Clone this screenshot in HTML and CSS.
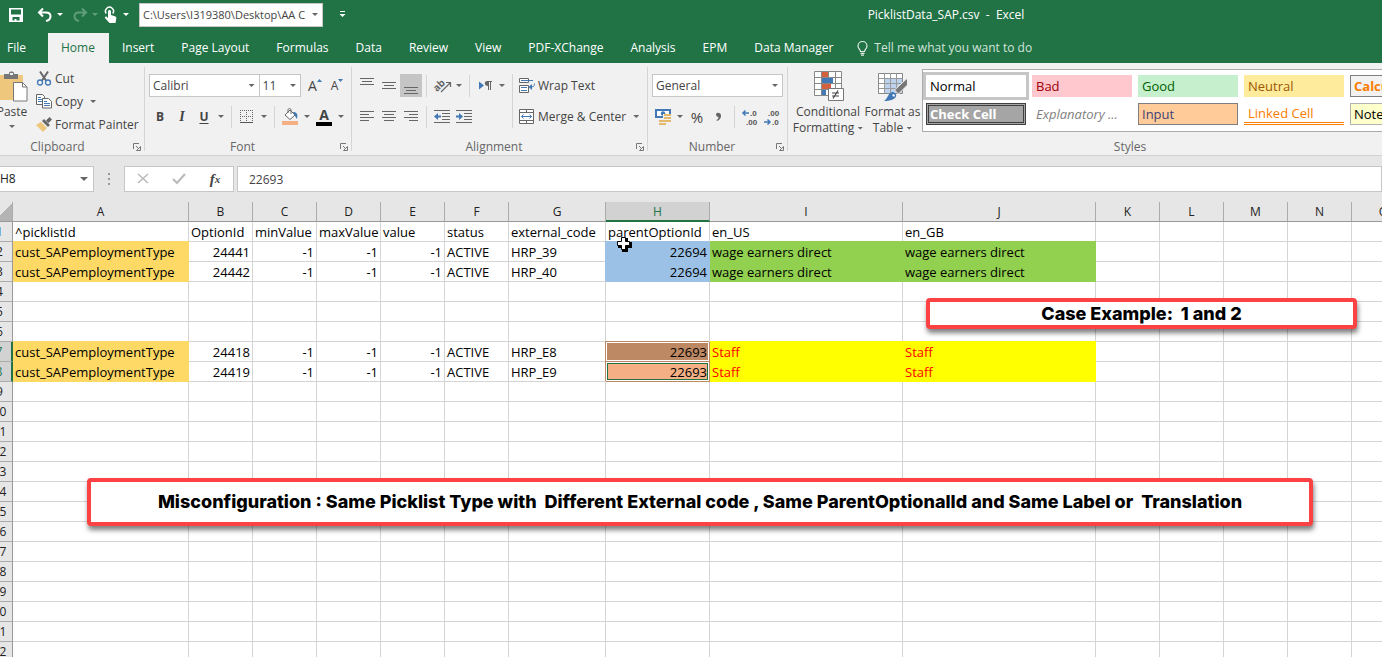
FILE: index.html
```html
<!DOCTYPE html>
<html lang="en">

<head>
    <meta charset="UTF-8">
    <meta name="viewport" content="width=device-width, initial-scale=1.0">
    <title>PicklistData_SAP.csv - Excel</title>
    <link rel="stylesheet" href="styles.css">
</head>

<body>
    <header class="title-bar">
        <div class="quick-access">
            <button class="qa-button" aria-label="Save">
                <svg width="16" height="16" viewBox="0 0 16 16"><path fill="#fff" fill-rule="evenodd" d="M1 1h14v14H1zM3 2.500v5h10v-5zM4.500 10v3.500h2V12h2v1.500h3V10z"/></svg>
            </button>
            <button class="qa-button" aria-label="Undo">
                <svg width="16" height="16" viewBox="0 0 16 16"><path fill="none" stroke="#fff" stroke-width="2" d="M6 1.500L2 5.500l4 4M2.500 5.500H9c6 0 6 7 0 8.500"/></svg>
            </button>
            <span class="caret light"></span>
            <button class="qa-button redo" aria-label="Redo">
                <svg width="16" height="16" viewBox="0 0 16 16"><path fill="none" stroke="#5f9d7b" stroke-width="2" d="M10 1.500l4 4-4 4M13.500 5.500H7c-6 0-6 7 0 8.500"/></svg>
            </button>
            <span class="caret faded"></span>
            <button class="qa-button" aria-label="Touch mode">
                <svg width="16" height="18" viewBox="0 0 16 18"><path fill="none" stroke="#fff" stroke-width="1.500" d="M3.200 7.500a4 4 0 1 1 6.600 0"/><path fill="#fff" d="M5 5.500c0-2 3-2 3 0V9l4 1.200c1.200.4 1.500 1.300 1.300 2.300l-.8 4.500H6.500L2 12c-.6-1 .6-2 1.600-1.200L5 12z"/></svg>
            </button>
            <span class="caret light"></span>
            <div class="select-box path-box">
                <select aria-label="File path"><option>C:\Users\I319380\Desktop\AA C</option></select>
                <span class="caret"></span>
            </div>
            <button class="qa-button more" aria-label="Customize Quick Access Toolbar">
                <svg width="7" height="7" viewBox="0 0 7 7"><path fill="#fff" d="M1 0h5v1H1zM0.500 3h6L3.500 6z"/></svg>
            </button>
        </div>
        <div class="document-title">PicklistData_SAP.csv&nbsp; -&nbsp; Excel</div>
    </header>

    <nav class="tabs">
        <a href="#" class="file">File</a>
        <a href="#" class="active">Home</a>
        <a href="#">Insert</a>
        <a href="#">Page Layout</a>
        <a href="#">Formulas</a>
        <a href="#">Data</a>
        <a href="#">Review</a>
        <a href="#">View</a>
        <a href="#">PDF-XChange</a>
        <a href="#">Analysis</a>
        <a href="#">EPM</a>
        <a href="#">Data Manager</a>
        <a href="#" class="tell-me">
            <svg width="11" height="15" viewBox="0 0 11 15"><path fill="none" stroke="#e4efe8" stroke-width="1.200" d="M3.500 10.500c0-2-2.500-2.500-2.500-5.500a4.500 4.500 0 0 1 9 0c0 3-2.500 3.500-2.500 5.500zM3.500 12.300h4M4 14.200h3"/></svg>
            Tell me what you want to do
        </a>
    </nav>

    <section class="ribbon">
        <div class="group">
            <div class="group-body clipboard">
                <button class="paste">
                    <svg width="32" height="31" viewBox="0 0 32 31"><path fill="#eec77d" d="M2 4h25v25H2z"/><path fill="#777" d="M8 3h5V1.500C14 0 17 0 18 1.500V3h4v5H8z"/><path fill="#f0f0f0" d="M14 2h3v2h-3z"/><path fill="#fff" stroke="#777" d="M17.500 11.500h9l4.500 4.500v14H17.500z"/><path fill="none" stroke="#777" d="M26.500 11.500V16H31"/></svg>
                    <span>Paste</span>
                    <span class="caret"></span>
                </button>
                <div class="clipboard-list">
                    <button class="labelled">
                        <svg width="16" height="15" viewBox="0 0 16 15"><path fill="none" stroke="#666" stroke-width="2" d="M4 0.500l6 9M12 0.500l-6 9"/><circle cx="4" cy="11.500" r="2.500" fill="#f0f0f0" stroke="#4178b5" stroke-width="1.300"/><circle cx="12" cy="11.500" r="2.500" fill="#f0f0f0" stroke="#4178b5" stroke-width="1.300"/></svg>
                        Cut
                    </button>
                    <button class="labelled">
                        <svg width="16" height="15" viewBox="0 0 16 15"><path fill="#fff" stroke="#666" d="M.5.500h6l2 2v8h-8z"/><path stroke="#4178b5" d="M2 3.500h3M2 5.500h4M2 7.500h4"/><path fill="#fff" stroke="#666" d="M6.500 4.500h6l3 3v6.500h-9z"/><path stroke="#4178b5" d="M8 7.500h3M8 9.500h6M8 11.500h6"/></svg>
                        Copy
                        <span class="caret"></span>
                    </button>
                    <button class="labelled">
                        <svg width="16" height="15" viewBox="0 0 16 15"><path fill="#eec77d" d="M0 8l5-3 6 6-4 4z"/><path fill="#666" d="M6 4l2-2 6 6-2 2zM10 3.500L13.500 0 16 2.500 12.500 6z"/></svg>
                        Format Painter
                    </button>
                </div>
            </div>
            <div class="group-name clipboard-name">Clipboard<svg class="launcher" width="8" height="8" viewBox="0 0 8 8"><path fill="none" stroke="#777" d="M.5 6V.5H6M3 3l3 3M7.500 3.500v4h-4z"/></svg></div>
        </div>

        <div class="group">
            <div class="group-body">
                <div class="tool-row">
                    <div class="select-box font-name">
                        <select aria-label="Font"><option>Calibri</option></select>
                        <span class="caret"></span>
                    </div>
                    <div class="select-box font-size">
                        <select aria-label="Font size"><option>11</option></select>
                        <span class="caret"></span>
                    </div>
                    <button class="tool grow" aria-label="Increase font size">A<svg width="5" height="3" viewBox="0 0 5 3"><path fill="#4178b5" d="M0 3h5L2.500 0z"/></svg></button>
                    <button class="tool shrink" aria-label="Decrease font size">A<svg width="5" height="3" viewBox="0 0 5 3"><path fill="#4178b5" d="M0 0h5L2.500 3z"/></svg></button>
                </div>
                <div class="tool-row">
                    <button class="tool bold">B</button>
                    <button class="tool italic">I</button>
                    <button class="tool underline">U</button>
                    <span class="caret-slot"><span class="caret"></span></span>
                    <span class="divider"></span>
                    <button class="tool" aria-label="Borders">
                        <svg width="14" height="14" viewBox="0 0 14 14"><path fill="none" stroke="#666" stroke-dasharray="1 1" d="M0 .5h13M0 6.500h13M.5 0v13M6.500 0v13M12.500 0v13"/><path stroke="#555" d="M0 12.500h13"/></svg>
                    </button>
                    <span class="caret-slot"><span class="caret"></span></span>
                    <span class="divider"></span>
                    <button class="tool" aria-label="Fill colour">
                        <svg width="17" height="17" viewBox="0 0 17 17"><path fill="#fff" stroke="#666" d="M3 7l5-5 5 5-5 4.500z"/><path fill="none" stroke="#666" d="M6 5V2c0-2 3-2 3 0v4"/><path fill="#4178b5" d="M11 4c4 0 5 2 4 7l-2-3z"/><path fill="#f4b084" d="M0 13h16v4H0z"/></svg>
                    </button>
                    <span class="caret-slot"><span class="caret"></span></span>
                    <button class="tool font-color" aria-label="Font colour">A</button>
                    <span class="caret-slot"><span class="caret"></span></span>
                </div>
            </div>
            <div class="group-name">Font<svg class="launcher" width="8" height="8" viewBox="0 0 8 8"><path fill="none" stroke="#777" d="M.5 6V.5H6M3 3l3 3M7.500 3.500v4h-4z"/></svg></div>
        </div>

        <div class="group">
            <div class="group-body alignment">
                <div class="tool-column">
                    <div class="tool-row">
                        <button class="tool" aria-label="Top align"><svg width="14" height="16" viewBox="0 0 14 16"><path stroke="#666" d="M0 .5h14M2 3.500h10M0 6.500h14"/></svg></button>
                        <button class="tool" aria-label="Middle align"><svg width="14" height="16" viewBox="0 0 14 16"><path stroke="#666" d="M0 4.500h14M2 7.500h10M0 10.500h14"/></svg></button>
                        <button class="tool pressed" aria-label="Bottom align"><svg width="14" height="16" viewBox="0 0 14 16"><path stroke="#666" d="M0 9.500h14M2 12.500h10M0 15.500h14"/></svg></button>
                        <span class="divider"></span>
                        <button class="tool" aria-label="Orientation">
                            <svg width="17" height="17" viewBox="0 0 17 17"><text x="-1" y="12" class="orient-text" transform="rotate(-45 5 9)">ab</text><path fill="none" stroke="#666" stroke-width="1.200" d="M7 15l9-9M12 5.500h4.500V10"/></svg>
                        </button>
                        <span class="caret-slot"><span class="caret"></span></span>
                        <span class="divider"></span>
                        <button class="tool" aria-label="Text direction">
                            <svg width="14" height="12" viewBox="0 0 14 12"><path fill="#4178b5" d="M1 1.500l5 4-5 4z"/><path fill="#666" d="M9 1h5v1h-1v8h-1V2h-1v8h-1V6C6 6 6 1 9 1z"/></svg>
                        </button>
                        <span class="caret-slot"><span class="caret"></span></span>
                    </div>
                    <div class="tool-row">
                        <button class="tool" aria-label="Align left"><svg width="14" height="13" viewBox="0 0 14 13"><path stroke="#666" d="M0 1.500h14M0 4.500h9M0 7.500h14M0 10.500h9"/></svg></button>
                        <button class="tool" aria-label="Center"><svg width="14" height="13" viewBox="0 0 14 13"><path stroke="#666" d="M0 1.500h14M2 4.500h10M0 7.500h14M2 10.500h10"/></svg></button>
                        <button class="tool" aria-label="Align right"><svg width="14" height="13" viewBox="0 0 14 13"><path stroke="#666" d="M0 1.500h14M5 4.500h9M0 7.500h14M5 10.500h9"/></svg></button>
                        <span class="divider"></span>
                        <button class="tool" aria-label="Decrease indent"><svg width="16" height="13" viewBox="0 0 16 13"><path stroke="#666" d="M0 .5h16M8 3.500h8M8 6.500h8M8 9.500h8M0 12.500h16"/><path fill="#4178b5" d="M0 6.500L4 3v2.500h3v2H4V10z"/></svg></button>
                        <button class="tool" aria-label="Increase indent"><svg width="16" height="13" viewBox="0 0 16 13"><path stroke="#666" d="M0 .5h16M8 3.500h8M8 6.500h8M8 9.500h8M0 12.500h16"/><path fill="#4178b5" d="M7 6.500L3 3v2.500H0v2h3V10z"/></svg></button>
                    </div>
                </div>
                <div class="tool-column wrap-merge">
                    <button class="labelled">
                        <svg width="16" height="16" viewBox="0 0 16 16"><path fill="#fff" stroke="#666" d="M.5.500h9v4h-9zM.5 7.500h9v7h-9z"/><path fill="none" stroke="#4178b5" d="M2 2.500h12M2 9.500h6M2 12.500h6M15.500 5.500c0 3-1 3.500-5 3.500"/><path fill="#4178b5" d="M9.500 9l3.500-3v6z"/></svg>
                        Wrap Text
                    </button>
                    <button class="labelled">
                        <svg width="16" height="16" viewBox="0 0 16 16"><path fill="#fff" stroke="#666" d="M.5.500h14v14H.5zM.5 3.500h14M.5 11.500h14M7.500.500v3M7.500 11.500v3"/><path fill="none" stroke="#4178b5" d="M2.500 7.500h10M4.500 5.500l-2 2 2 2M10.500 5.500l2 2-2 2"/></svg>
                        Merge &amp; Center
                        <span class="caret"></span>
                    </button>
                </div>
            </div>
            <div class="group-name">Alignment<svg class="launcher" width="8" height="8" viewBox="0 0 8 8"><path fill="none" stroke="#777" d="M.5 6V.5H6M3 3l3 3M7.500 3.500v4h-4z"/></svg></div>
        </div>

        <div class="group">
            <div class="group-body">
                <div class="tool-row">
                    <div class="select-box number-format">
                        <select aria-label="Number format"><option>General</option></select>
                        <span class="caret"></span>
                    </div>
                </div>
                <div class="tool-row">
                    <button class="tool" aria-label="Accounting format">
                        <svg width="17" height="17" viewBox="0 0 17 17"><path fill="#4178b5" d="M0 1h16v9H0z"/><path fill="#fff" d="M2 3h12v5H2z"/><circle cx="8" cy="5.500" r="2.200" fill="#4178b5"/><path fill="#f0f0f0" d="M8 6h9v4H8zM3 10h10v7H3z"/><path fill="#e5b96c" d="M9 6h7v2H9zM9 9h7v2H9zM9 12h7v2H9zM4 12h7v2H4zM4 15h7v2H4z"/></svg>
                    </button>
                    <span class="caret-slot"><span class="caret"></span></span>
                    <button class="tool percent">%</button>
                    <button class="tool" aria-label="Comma style"><svg width="6" height="10" viewBox="0 0 6 10"><path fill="#666" d="M0 2.500C0 0 5 0 5 3.500 5 6 4 8 1 9l-.5-1c1.500-.7 2-1.500 2-3C1 5 0 4 0 2.500z"/></svg></button>
                    <span class="divider"></span>
                    <button class="tool" aria-label="Increase decimal">
                        <svg width="16" height="18" viewBox="0 0 16 18"><path fill="none" stroke="#4178b5" stroke-width="1.500" d="M1 5h6M3.500 2.500L1 5l2.500 2.500"/><text x="8" y="8" class="decimal">.0</text><text x="4" y="17" class="decimal">.00</text></svg>
                    </button>
                    <button class="tool" aria-label="Decrease decimal">
                        <svg width="16" height="18" viewBox="0 0 16 18"><path fill="none" stroke="#4178b5" stroke-width="1.500" d="M0 14h6M3.500 11.500L6 14l-2.500 2.500"/><text x="4" y="8" class="decimal">.00</text><text x="8" y="17" class="decimal">.0</text></svg>
                    </button>
                </div>
            </div>
            <div class="group-name">Number<svg class="launcher" width="8" height="8" viewBox="0 0 8 8"><path fill="none" stroke="#777" d="M.5 6V.5H6M3 3l3 3M7.500 3.500v4h-4z"/></svg></div>
        </div>

        <div class="group styles-group">
            <div class="group-body styles-body">
                <button class="big conditional">
                    <svg width="31" height="31" viewBox="0 0 31 31"><path fill="#fff" stroke="#888" d="M1.500.500h27v24h-27zM1.500 6.500h27M1.500 12.500h27M1.500 18.500h27M8.500.500v24M15.500.500v24M22.500.500v24"/><path fill="#d65f3d" d="M9 1h6v5H9zM9 13h9v5H9z"/><path fill="#4178b5" d="M9 7h11v5H9zM9 19h4v5H9z"/><path fill="#fff" stroke="#777" d="M15.500 17.500h15v12h-15z"/><path stroke="#444" stroke-width="1.200" d="M19 22h7M19 25h7M25 19.500l-5 8"/></svg>
                    <span>Conditional</span>
                    <span class="with-caret">Formatting <span class="caret"></span></span>
                </button>
                <button class="big">
                    <svg width="31" height="31" viewBox="0 0 31 31"><path fill="#fff" stroke="#888" d="M1.500 2.500h24v20h-24z"/><path fill="#bdd2ec" d="M8 8h17v14H8z"/><path stroke="#999" fill="none" d="M1.500 7.500h24M1.500 12.500h24M1.500 17.500h24M7.500 2.500v20M13.500 2.500v20M19.500 2.500v20"/><path fill="#777" stroke="#f1f1f1" d="M30.500 7v7l-9 9-4-4z"/><path fill="#4178b5" d="M7 30c4-2 4-9 9-9 6 2 4 9-9 9z"/><path fill="#fff" d="M15 24c2-2 4 0 2 2z"/></svg>
                    <span>Format as</span>
                    <span class="with-caret">Table <span class="caret"></span></span>
                </button>
                <div class="gallery">
                    <button class="style normal">Normal</button>
                    <button class="style check-cell">Check Cell</button>
                    <button class="style bad">Bad</button>
                    <button class="style explanatory">Explanatory ...</button>
                    <button class="style good">Good</button>
                    <button class="style input-style">Input</button>
                    <button class="style neutral">Neutral</button>
                    <button class="style linked">Linked Cell</button>
                    <button class="style calculation">Calculation</button>
                    <button class="style note">Note</button>
                </div>
            </div>
            <div class="group-name">Styles</div>
        </div>
    </section>

    <section class="formula-bar">
        <div class="select-box name-box">
            <input type="text" value="H8" aria-label="Name box">
            <span class="caret"></span>
        </div>
        <svg class="grip" width="2" height="12" viewBox="0 0 2 12"><path fill="#999" d="M0 0h2v2H0zM0 5h2v2H0zM0 10h2v2H0z"/></svg>
        <div class="formula-buttons">
            <button aria-label="Cancel"><svg width="12" height="12" viewBox="0 0 12 12"><path stroke="#bbb" stroke-width="1.600" d="M1 1l10 9M11 1L1 10"/></svg></button>
            <button aria-label="Enter"><svg width="14" height="12" viewBox="0 0 14 12"><path fill="none" stroke="#bbb" stroke-width="2.200" d="M1 6l4 4 8-9"/></svg></button>
            <button class="fx" aria-label="Insert function">f<small>x</small></button>
        </div>
        <input type="text" class="formula-input" value="22693" aria-label="Formula">
    </section>

    <main class="sheet">
        <table>
            <colgroup>
                <col class="col-row"><col class="col-a"><col><col><col><col><col><col class="col-g"><col class="col-h"><col class="col-label"><col class="col-label"><col><col><col><col><col>
            </colgroup>
            <thead>
                <tr><th class="corner"></th></tr>
            </thead>
            <tbody></tbody>
        </table>

        <svg class="cursor" width="16" height="16" viewBox="0 0 16 16"><path fill="#000" d="M6 2h6v4h4v6h-4v4H6v-4H2V6h4z"/><path fill="#fff" stroke="#000" d="M5.500 1.500h4v4h4v4h-4v4h-4v-4h-4v-4h4z"/></svg>
        <div class="callout case">Case Example:&nbsp; 1 and 2</div>
        <div class="callout summary">Misconfiguration : Same Picklist Type with&nbsp; Different External code , Same ParentOptionalId and Same Label or&nbsp; Translation</div>
    </main>

    <script>
        const columns = 'ABCDEFGHIJKLMNO'.split('');
        const numeric = ['B', 'C', 'D', 'E', 'H'];
        const rows = {
            1: ['^picklistId', 'OptionId', 'minValue', 'maxValue', 'value', 'status', 'external_code', 'parentOptionId', 'en_US', 'en_GB'],
            2: ['cust_SAPemploymentType', '24441', '-1', '-1', '-1', 'ACTIVE', 'HRP_39', '22694', 'wage earners direct', 'wage earners direct'],
            3: ['cust_SAPemploymentType', '24442', '-1', '-1', '-1', 'ACTIVE', 'HRP_40', '22694', 'wage earners direct', 'wage earners direct'],
            7: ['cust_SAPemploymentType', '24418', '-1', '-1', '-1', 'ACTIVE', 'HRP_E8', '22693', 'Staff', 'Staff'],
            8: ['cust_SAPemploymentType', '24419', '-1', '-1', '-1', 'ACTIVE', 'HRP_E9', '22693', 'Staff', 'Staff']
        };
        // cell fills by row, then by column
        const first = { A: 'gold', H: 'blue', I: 'green', J: 'green' };
        const fills = {
            2: first,
            3: first,
            7: { A: 'gold', H: 'selected', I: 'yellow', J: 'yellow' },
            8: { A: 'gold', H: 'selected current', I: 'yellow', J: 'yellow' }
        };

        const headRow = document.querySelector('thead tr');
        columns.forEach(name => {
            const th = document.createElement('th');
            th.textContent = name;
            if (name === 'H') th.className = 'active-column';
            headRow.appendChild(th);
        });

        const body = document.querySelector('tbody');
        for (let r = 1; r <= 22; r++) {
            const tr = document.createElement('tr');
            const th = document.createElement('th');
            th.textContent = r;
            if (r === 7 || r === 8) th.className = 'active-row';
            tr.appendChild(th);
            columns.forEach((name, i) => {
                const td = document.createElement('td');
                td.textContent = (rows[r] && rows[r][i]) || '';
                if (fills[r] && fills[r][name]) td.className = fills[r][name];
                if (r > 1 && numeric.includes(name)) td.classList.add('number');
                tr.appendChild(td);
            });
            body.appendChild(tr);
        }
    </script>
</body>

</html>
```
FILE: styles.css
```css
* {
    box-sizing: border-box;
}

body {
    margin: 0;
    height: 100vh;
    display: flex;
    flex-direction: column;
    overflow: hidden;
    background-color: #e6e6e6;
    color: #444;
    font-family: "Open Sans", "Noto Sans", sans-serif;
    font-size: 12px;
    line-height: 16px;
}

button,
input,
select {
    font: inherit;
    color: inherit;
    background: none;
    border: none;
    border-radius: 0;
    margin: 0;
    padding: 0;
}

select {
    appearance: none;
}

svg {
    display: block;
    flex: none;
    overflow: visible;
}

.caret {
    flex: none;
    width: 6px;
    height: 3px;
    background-color: #666;
    clip-path: polygon(0 0, 100% 0, 50% 100%);
}

.caret.light {
    background-color: #fff;
}

.caret.faded {
    background-color: #5f9d7b;
}

/* drop-down with its arrow stacked on the right */
.select-box {
    display: grid;
    align-items: center;
    height: 23px;
    background-color: #fff;
    border: 1px solid #c6c6c6;
}

.select-box > * {
    grid-area: 1 / 1;
    min-width: 0;
}

.select-box > select {
    width: 100%;
    padding-left: 3px;
}

.select-box .caret {
    justify-self: end;
    margin-right: 4px;
    pointer-events: none;
}

/* title bar */
.title-bar {
    display: grid;
    grid-template-columns: 510px 1fr;
    height: 33px;
    padding-bottom: 4px;
    align-items: center;
    background-color: #217346;
    color: #fff;
}

.quick-access {
    display: flex;
    align-items: center;
    padding-left: 8px;
}

.qa-button {
    margin-right: 4px;
}

.qa-button:first-child {
    margin-right: 13px;
}

.redo {
    margin-left: 9px;
}

.quick-access .caret + .qa-button:not(.redo) {
    margin-left: 5px;
}

.path-box {
    width: 184px;
    height: 24px;
    margin-left: 10px;
    color: #444;
    font-size: 11px;
}

.quick-access .more {
    margin-left: 16px;
}

.document-title {
    text-align: center;
}

/* tabs */
.tabs {
    display: flex;
    height: 30px;
    background-color: #217346;
}

.tabs a {
    display: flex;
    align-items: center;
    padding: 0 14px 0 13px;
    color: #fff;
    text-decoration: none;
    white-space: nowrap;
}

.tabs .file {
    padding: 0 22px 0 7px;
}

.tabs .active {
    background-color: #f1f1f1;
    color: #217346;
}

.tabs .tell-me {
    gap: 6px;
    padding-left: 10px;
    color: #d3e3da;
}

/* ribbon */
.ribbon {
    display: grid;
    grid-template-columns: 145px 207px 296px 140px 1fr;
    flex: none;
    background-color: #f1f1f1;
    border-bottom: 1px solid #d2d2d2;
}

.group {
    display: flex;
    flex-direction: column;
    min-width: 0;
    height: 92px;
    padding-top: 4px;
    background: linear-gradient(#d5d5d5, #d5d5d5) no-repeat right 50% / 1px 84px;
}

.group-body {
    flex: 1;
    padding: 7px 4px 0;
}

.group-name {
    display: grid;
    grid-template-columns: 1fr auto;
    align-items: center;
    justify-items: center;
    padding: 0 4px 0 0;
    color: #666;
}

.clipboard-name {
    margin-left: -18px;
}

.styles-group {
    background: none;
}

.styles-group .group-name {
    padding-left: 94px;
}

.tool-row {
    display: flex;
    align-items: center;
    height: 23px;
    margin-bottom: 8px;
}

.tool {
    display: flex;
    align-items: center;
    justify-content: center;
    flex: none;
    width: 22px;
    height: 23px;
    color: #444;
}

.pressed {
    background-color: #c5c5c5;
}

.caret-slot {
    display: flex;
    justify-content: center;
    width: 12px;
}

.divider {
    width: 1px;
    height: 22px;
    margin: 0 4px;
    background-color: #d5d5d5;
}

.labelled {
    display: flex;
    align-items: center;
    gap: 3px;
    height: 23px;
    white-space: nowrap;
}

.labelled .caret {
    margin-left: 4px;
}

.group-body.clipboard {
    display: flex;
    align-items: flex-start;
    padding: 0;
}

.paste {
    display: flex;
    flex-direction: column;
    align-items: center;
    width: 32px;
    margin-left: -4px;
    padding-top: 4px;
}

.paste span {
    margin-top: 2px;
}

.paste .caret {
    margin-top: 5px;
}

.clipboard-list {
    margin-left: 8px;
}

.font-name {
    width: 112px;
}

.font-size {
    width: 43px;
    margin-left: -1px;
}

.grow,
.shrink {
    font-size: 14px;
}

.shrink {
    font-size: 12px;
}

.grow {
    margin-left: 3px;
}

.grow svg,
.shrink svg {
    margin-bottom: 10px;
}

.bold,
.underline {
    font-weight: bold;
}

.italic {
    font-family: "Liberation Serif", serif;
    font-size: 14px;
    font-style: italic;
    font-weight: bold;
}

.underline {
    text-decoration: underline;
    text-underline-offset: 2px;
}

.font-color {
    width: 16px;
    height: 18px;
    margin: 0 3px;
    border-bottom: 4px solid #000;
    font-size: 14px;
    font-weight: bold;
}

.alignment {
    display: flex;
}

.wrap-merge {
    height: 54px;
    margin-left: 4px;
    padding-left: 6px;
    border-left: 1px solid #d5d5d5;
}

.wrap-merge .labelled + .labelled {
    margin-top: 8px;
}

.orient-text {
    font-size: 10px;
    font-weight: bold;
    fill: #666;
}

.number-format {
    width: 131px;
}

.percent {
    font-size: 15px;
}

.decimal {
    font-size: 8px;
    font-weight: bold;
    font-family: "Liberation Sans", sans-serif;
    fill: #555;
}

.styles-body {
    display: flex;
    padding: 2px 0 0 5px;
}

.big {
    display: flex;
    flex-direction: column;
    align-items: center;
    flex: none;
    width: 59px;
    padding-top: 2px;
}

.big.conditional {
    width: 70px;
}

.big svg {
    margin-bottom: 2px;
}

.with-caret {
    display: flex;
    align-items: center;
    gap: 3px;
}

.gallery {
    display: grid;
    grid-template-rows: 22px 22px;
    grid-auto-columns: 100px;
    grid-auto-flow: column;
    gap: 6px;
    flex: 1;
    height: 63px;
    padding: 5px 3px;
    overflow: hidden;
    background-color: #fff;
    border: 1px solid #ababab;
    border-right: none;
}

.style {
    padding: 0 4px;
    text-align: left;
    font-size: 13px;
    color: #000;
    white-space: nowrap;
}

.normal {
    box-shadow: 0 0 0 3px #c6c6c6;
}

.bad {
    background-color: #ffc7ce;
    color: #9c0006;
}

.good {
    background-color: #c6efce;
    color: #006100;
}

.neutral {
    background-color: #ffeb9c;
    color: #9c5700;
}

.calculation {
    padding-left: 3px;
    background-color: #f2f2f2;
    border: 1px solid #7f7f7f;
    color: #fa7d00;
    font-weight: bold;
}

.check-cell {
    padding: 0 1px;
    background-color: #a5a5a5;
    border: 3px double #3f3f3f;
    color: #fff;
    font-weight: bold;
    line-height: 14px;
}

.explanatory {
    color: #7f7f7f;
    font-style: italic;
}

.input-style {
    padding-left: 3px;
    background-color: #ffcc99;
    border: 1px solid #7f7f7f;
    color: #3f3f76;
}

.linked {
    border-bottom: 3px double #ff8001;
    color: #fa7d00;
}

.note {
    padding-left: 3px;
    background-color: #ffffcc;
    border: 1px solid #b2b2b2;
}

/* formula bar */
.formula-bar {
    display: flex;
    flex: none;
    align-items: center;
    padding: 10px 0;
}

.name-box {
    width: 95px;
    height: 26px;
    margin-left: -1px;
    color: #222;
}

.name-box input {
    width: 100%;
}

.name-box .caret {
    width: 8px;
    height: 4px;
    margin-right: 5px;
}

.grip {
    margin: 0 14px;
}

.formula-buttons {
    display: flex;
    justify-content: space-around;
    width: 110px;
    height: 26px;
    background-color: #fff;
    border: 1px solid #c6c6c6;
}

.formula-buttons button {
    width: 22px;
    display: flex;
    align-items: center;
    justify-content: center;
}

.fx {
    font-family: "Liberation Serif", serif;
    font-size: 15px;
    font-style: italic;
    font-weight: bold;
}

.fx small {
    font-size: 11px;
}

.formula-input {
    flex: 1;
    height: 26px;
    margin-left: 3px;
    padding-left: 11px;
    background-color: #fff;
    border: 1px solid #c6c6c6;
}

/* sheet, scrolled so the row headers are half out of view */
.sheet {
    position: relative;
    flex: 1;
    overflow: hidden;
    background-color: #fff;
}

table {
    width: 1429px;
    margin-left: -13px;
    table-layout: fixed;
    border-collapse: separate;
    border-spacing: 0;
    font-size: 13px;
    color: #000;
}

col {
    width: 64px;
}

.col-row {
    width: 26px;
}

.col-a {
    width: 176px;
}

.col-g {
    width: 97px;
}

.col-h {
    width: 104px;
}

.col-label {
    width: 193px;
}

th {
    height: 20px;
    padding: 0;
    background-color: #e6e6e6;
    border-right: 1px solid #ababab;
    border-bottom: 1px solid #999;
    font-size: 12px;
    font-weight: normal;
    line-height: 18px;
    color: #222;
}

tbody th {
    padding-top: 1px;
    border-right-color: #999;
    border-bottom-color: #ababab;
}

.corner {
    background: linear-gradient(135deg, #e6e6e6 60%, #b4b4b4 60%);
}

.active-column {
    background-color: #d2d2d2;
    border-bottom: 2px solid #217346;
    color: #217346;
    line-height: 17px;
}

.active-row {
    background-color: #d2d2d2;
    border-right: 2px solid #217346;
    color: #217346;
}

td {
    height: 20px;
    padding: 2px 2px 0;
    border-right: 1px solid #d4d4d4;
    border-bottom: 1px solid #d4d4d4;
    line-height: 17px;
    white-space: nowrap;
}

.number {
    text-align: right;
}

.gold {
    background-color: #ffd966;
    border-color: #ffd966;
    box-shadow: 0 -1px 0 #ffd966;
}

.blue {
    background-color: #9bc2e6;
    border-color: #9bc2e6;
    box-shadow: -1px -1px 0 #9bc2e6;
}

.green {
    background-color: #92d050;
    border-color: #92d050;
    box-shadow: 0 -1px 0 #92d050;
}

.yellow {
    background-color: #ffff00;
    border-color: #ffff00;
    box-shadow: 0 -1px 0 #ffff00;
    color: #ff0000;
}

.selected {
    background-color: #bd8864;
    border-color: #bd8864;
    box-shadow: -1px -1px 0 #bd8864, inset 0 0 0 1px #fff;
}

.current {
    background-color: #f4b084;
    box-shadow: -1px -1px 0 #bd8864, inset 0 0 0 1px #fff, inset 0 0 0 2px #217346;
}

.cursor {
    position: absolute;
    left: 616px;
    top: 34px;
}

/* annotations laid over the sheet */
.callout {
    position: absolute;
    display: flex;
    align-items: center;
    justify-content: center;
    background-color: #fff;
    border: 4px solid #fc4242;
    border-radius: 4px;
    box-shadow: 1px 4px 5px rgba(0, 0, 0, 0.5);
    color: #000;
    font-family: Inter, "Liberation Sans", sans-serif;
    font-size: 18px;
    font-weight: 800;
    white-space: nowrap;
}

.case {
    left: 926px;
    top: 96px;
    width: 431px;
    height: 31px;
}

.summary {
    left: 87px;
    top: 276px;
    width: 1226px;
    height: 48px;
}
```
